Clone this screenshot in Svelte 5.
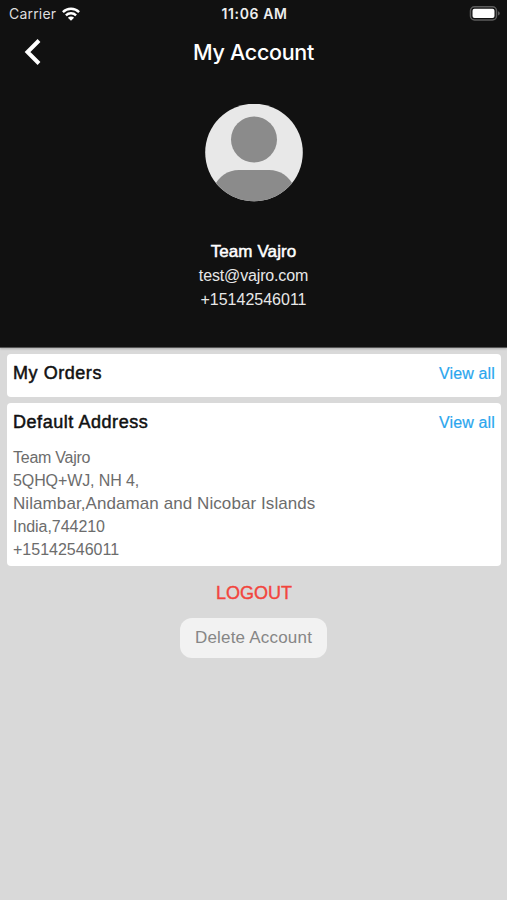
<script lang="ts">
  type Line = { text: string; size: number; spacing: number };

  const user = {
    name: 'Team Vajro',
    email: 'test@vajro.com',
    phone: '+15142546011',
  };

  const address: Line[] = [
    { text: 'Team Vajro', size: 16, spacing: -0.25 },
    { text: '5QHQ+WJ, NH 4,', size: 16, spacing: -0.1 },
    { text: 'Nilambar,Andaman and Nicobar Islands', size: 17, spacing: 0.08 },
    { text: 'India,744210', size: 16, spacing: -0.05 },
    { text: '+15142546011', size: 16, spacing: 0 },
  ];
</script>

<div class="screen">
  <header>
    <div class="status">
      <div class="carrier">
        <span>Carrier</span>
        <svg width="18" height="14" viewBox="0 0 18 14" fill="none" stroke="#fff" stroke-width="2.4">
          <path d="M0.9 5.1A11.5 11.5 0 0 1 17.1 5.1" />
          <path d="M3.9 8.3A7.2 7.2 0 0 1 14.1 8.3" />
          <path d="M9 13.8L5.9 10.7A4.4 4.4 0 0 1 12.1 10.7Z" fill="#fff" stroke="none" />
        </svg>
      </div>
      <span class="time">11:06 AM</span>
      <svg class="battery" width="31" height="15" viewBox="0 0 31 15">
        <rect x="1.5" y="0.8" width="26" height="13.2" rx="4" fill="none" stroke="#5c5c5c" stroke-width="1.5" />
        <rect x="3.5" y="2.8" width="22" height="9.2" rx="2" fill="#fff" />
        <path d="M29 5.2Q30.8 5.8 30.800 7.4T29 9.6Z" fill="#5c5c5c" />
      </svg>
    </div>

    <div class="navbar">
      <button class="back" aria-label="Back">
        <svg width="18" height="26" viewBox="0 0 18 26" fill="none" stroke="#fff" stroke-width="4">
          <path d="M15 1.5L3.5 13L15 24.5" />
        </svg>
      </button>
      <h1>My Account</h1>
    </div>

    <svg class="avatar" width="98" height="98" viewBox="0 0 98 98">
      <clipPath id="round"><circle cx="49" cy="48.5" r="48.8" /></clipPath>
      <g clip-path="url(#round)">
        <rect width="98" height="98" fill="#e8e8e8" />
        <circle cx="49" cy="35.5" r="23" fill="#8b8b8b" />
        <path d="M8 98V84Q17 66 34 66H64Q81 66 90 84V98Z" fill="#8b8b8b" />
      </g>
    </svg>

    <div class="user">
      <strong>{user.name}</strong>
      <span class="email">{user.email}</span>
      <span class="phone">{user.phone}</span>
    </div>
  </header>

  <main>
    <section class="card orders">
      <div class="card-head">
        <h2>My Orders</h2>
        <a href="#orders">View all</a>
      </div>
    </section>

    <section class="card address">
      <div class="card-head">
        <h2>Default Address</h2>
        <a href="#addresses">View all</a>
      </div>
      <div class="lines">
        {#each address as line}
          <p style="font-size: {line.size}px; letter-spacing: {line.spacing}px">{line.text}</p>
        {/each}
      </div>
    </section>

    <button class="logout">LOGOUT</button>
    <button class="delete">Delete Account</button>
  </main>
</div>

<style>
  :global(body) {
    margin: 0;
    background: #d9d9d9;
  }

  .screen {
    width: 507px;
    height: 900px;
    overflow: hidden;
    background: #d9d9d9;
    font-family: "Liberation Sans", Arial, sans-serif;
    display: flex;
    flex-direction: column;
  }

  header {
    height: 347px;
    flex: none;
    background: #111;
    border-bottom: 1px solid #555;
    box-shadow: 0 1px 2px rgba(0, 0, 0, 0.2);
    color: #fff;
    display: flex;
    flex-direction: column;
    align-items: center;
  }

  .status {
    width: 100%;
    height: 27px;
    box-sizing: border-box;
    padding: 0 7px 0 9px;
    display: grid;
    grid-template-columns: 1fr auto 1fr;
    align-items: center;
    font-family: Inter, sans-serif;
    font-size: 14px;
  }

  .carrier {
    display: flex;
    align-items: center;
    gap: 6px;
    color: #dedede;
    letter-spacing: 0.2px;
  }

  .time {
    font-weight: 600;
    font-size: 14px;
    letter-spacing: 0.6px;
    color: #eee;
  }

  .battery {
    justify-self: end;
  }

  .navbar {
    width: 100%;
    height: 50px;
    display: grid;
    grid-template-columns: 60px 1fr 60px;
    align-items: center;
  }

  button {
    border: none;
    background: none;
    padding: 0;
    font-family: inherit;
  }

  .back {
    padding-left: 24px;
    display: flex;
  }

  h1 {
    margin: 0;
    text-align: center;
    font-family: Inter, sans-serif;
    font-size: 21.500px;
    letter-spacing: -0.3px;
    font-weight: 500;
  }

  .avatar {
    margin-top: 27px;
    flex: none;
  }

  .user {
    margin-top: 38px;
    display: flex;
    flex-direction: column;
    align-items: center;
    line-height: 24px;
    font-size: 16px;
    color: #e8e8e8;
  }

  strong {
    font-size: 17px;
    font-weight: 400;
    letter-spacing: 0.1px;
    color: #fff;
    -webkit-text-stroke: 0.5px #fff;
  }

  .email {
    letter-spacing: -0.15px;
  }

  main {
    padding: 6px 6px 0 7px;
    display: flex;
    flex-direction: column;
    align-items: center;
  }

  .card {
    width: 100%;
    box-sizing: border-box;
    padding: 0 6px;
    border-radius: 4px;
    background: #fff;
  }

  .orders {
    height: 43px;
    margin-bottom: 6px;
  }

  .address {
    height: 163px;
  }

  .card-head {
    height: 39px;
    display: flex;
    align-items: center;
    justify-content: space-between;
  }

  h2 {
    margin: 0;
    font-size: 18px;
    font-weight: 400;
    letter-spacing: 0.55px;
    color: #111;
    -webkit-text-stroke: 0.5px #111;
  }

  a {
    color: #2ba6ee;
    font-size: 16px;
    letter-spacing: 0.15px;
    -webkit-text-stroke: 0.2px #2ba6ee;
    text-decoration: none;
  }

  .lines {
    margin-top: 4px;
    color: #6c6c6c;
  }

  p {
    margin: 0;
    line-height: 23px;
    white-space: nowrap;
  }

  .logout {
    margin-top: 15px;
    height: 24px;
    font-size: 18px;
    color: #f2453d;
    -webkit-text-stroke: 0.4px #f2453d;
  }

  .delete {
    margin: 13px 1px 0 0;
    width: 147px;
    height: 40px;
    border-radius: 12px;
    background: #f2f2f2;
    color: #868686;
    font-size: 17px;
    letter-spacing: 0.2px;
  }
</style>
